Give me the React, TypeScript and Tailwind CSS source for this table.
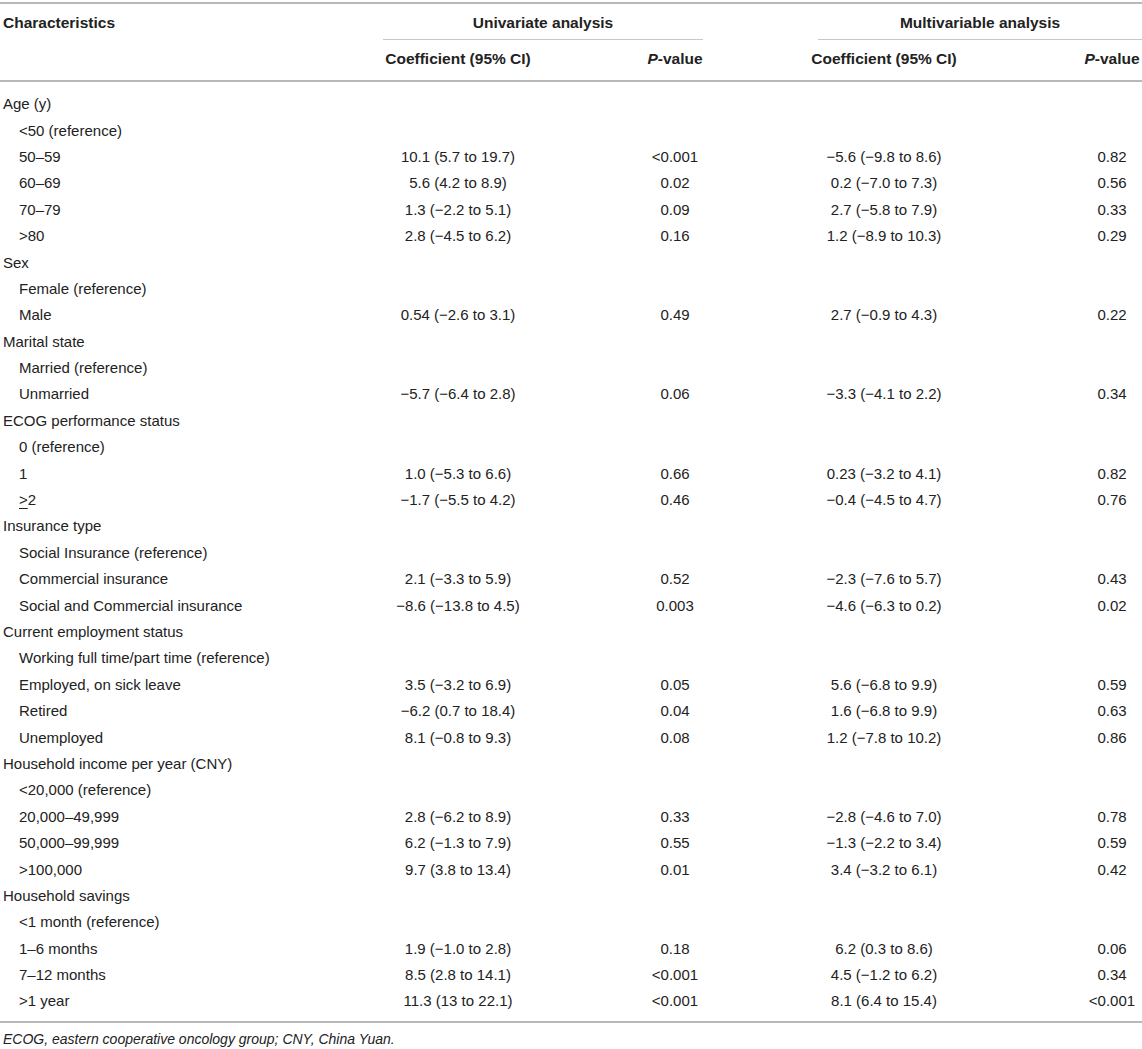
import React from "react";

type Row = {
  label: React.ReactNode;
  sub?: boolean;
  uc?: string;
  up?: string;
  mc?: string;
  mp?: string;
};

const M = "\u2212";

const rows: Row[] = [
  { label: "Age (y)" },
  { label: "<50 (reference)", sub: true },
  { label: "50–59", sub: true, uc: "10.1 (5.7 to 19.7)", up: "<0.001", mc: `${M}5.6 (${M}9.8 to 8.6)`, mp: "0.82" },
  { label: "60–69", sub: true, uc: "5.6 (4.2 to 8.9)", up: "0.02", mc: `0.2 (${M}7.0 to 7.3)`, mp: "0.56" },
  { label: "70–79", sub: true, uc: `1.3 (${M}2.2 to 5.1)`, up: "0.09", mc: `2.7 (${M}5.8 to 7.9)`, mp: "0.33" },
  { label: ">80", sub: true, uc: `2.8 (${M}4.5 to 6.2)`, up: "0.16", mc: `1.2 (${M}8.9 to 10.3)`, mp: "0.29" },
  { label: "Sex" },
  { label: "Female (reference)", sub: true },
  { label: "Male", sub: true, uc: `0.54 (${M}2.6 to 3.1)`, up: "0.49", mc: `2.7 (${M}0.9 to 4.3)`, mp: "0.22" },
  { label: "Marital state" },
  { label: "Married (reference)", sub: true },
  { label: "Unmarried", sub: true, uc: `${M}5.7 (${M}6.4 to 2.8)`, up: "0.06", mc: `${M}3.3 (${M}4.1 to 2.2)`, mp: "0.34" },
  { label: "ECOG performance status" },
  { label: "0 (reference)", sub: true },
  { label: "1", sub: true, uc: `1.0 (${M}5.3 to 6.6)`, up: "0.66", mc: `0.23 (${M}3.2 to 4.1)`, mp: "0.82" },
  {
    label: (
      <>
        <span className="underline underline-offset-[3px]">&gt;</span>2
      </>
    ),
    sub: true,
    uc: `${M}1.7 (${M}5.5 to 4.2)`,
    up: "0.46",
    mc: `${M}0.4 (${M}4.5 to 4.7)`,
    mp: "0.76",
  },
  { label: "Insurance type" },
  { label: "Social Insurance (reference)", sub: true },
  { label: "Commercial insurance", sub: true, uc: `2.1 (${M}3.3 to 5.9)`, up: "0.52", mc: `${M}2.3 (${M}7.6 to 5.7)`, mp: "0.43" },
  { label: "Social and Commercial insurance", sub: true, uc: `${M}8.6 (${M}13.8 to 4.5)`, up: "0.003", mc: `${M}4.6 (${M}6.3 to 0.2)`, mp: "0.02" },
  { label: "Current employment status" },
  { label: "Working full time/part time (reference)", sub: true },
  { label: "Employed, on sick leave", sub: true, uc: `3.5 (${M}3.2 to 6.9)`, up: "0.05", mc: `5.6 (${M}6.8 to 9.9)`, mp: "0.59" },
  { label: "Retired", sub: true, uc: `${M}6.2 (0.7 to 18.4)`, up: "0.04", mc: `1.6 (${M}6.8 to 9.9)`, mp: "0.63" },
  { label: "Unemployed", sub: true, uc: `8.1 (${M}0.8 to 9.3)`, up: "0.08", mc: `1.2 (${M}7.8 to 10.2)`, mp: "0.86" },
  { label: "Household income per year (CNY)" },
  { label: "<20,000 (reference)", sub: true },
  { label: "20,000–49,999", sub: true, uc: `2.8 (${M}6.2 to 8.9)`, up: "0.33", mc: `${M}2.8 (${M}4.6 to 7.0)`, mp: "0.78" },
  { label: "50,000–99,999", sub: true, uc: `6.2 (${M}1.3 to 7.9)`, up: "0.55", mc: `${M}1.3 (${M}2.2 to 3.4)`, mp: "0.59" },
  { label: ">100,000", sub: true, uc: "9.7 (3.8 to 13.4)", up: "0.01", mc: `3.4 (${M}3.2 to 6.1)`, mp: "0.42" },
  { label: "Household savings" },
  { label: "<1 month (reference)", sub: true },
  { label: "1–6 months", sub: true, uc: `1.9 (${M}1.0 to 2.8)`, up: "0.18", mc: "6.2 (0.3 to 8.6)", mp: "0.06" },
  { label: "7–12 months", sub: true, uc: "8.5 (2.8 to 14.1)", up: "<0.001", mc: `4.5 (${M}1.2 to 6.2)`, mp: "0.34" },
  { label: ">1 year", sub: true, uc: "11.3 (13 to 22.1)", up: "<0.001", mc: "8.1 (6.4 to 15.4)", mp: "<0.001" },
];

function PValue() {
  return (
    <>
      <span className="italic">P</span>-value
    </>
  );
}

export default function App() {
  return (
    <div
      className="w-[1142px] h-[1049px] bg-white text-[#222] text-[15px] leading-[20px] overflow-hidden"
      style={{ fontFamily: '"Liberation Sans", Arial, sans-serif' }}
    >
      <div className="pt-[2px]">
        <div className="h-[2px] bg-[#b8b8b8]" />

        {/* Header row 1 */}
        <div className="flex font-bold whitespace-nowrap text-[15.5px]">
          <div className="w-[383px] pl-[3px] pt-[9px]">Characteristics</div>
          <div className="w-[320px] pt-[9px] text-center">
            Univariate analysis
            <div className="mt-[6px] h-px bg-[#c8c8c8]" />
          </div>
          <div className="ml-[115px] w-[324px] pt-[9px] text-center">
            Multivariable analysis
            <div className="mt-[6px] h-px bg-[#c8c8c8]" />
          </div>
        </div>

        {/* Header row 2 */}
        <div className="flex font-bold whitespace-nowrap text-[15.5px] pt-[9px] pb-[11px]">
          <div className="w-[378px]" />
          <div className="w-[160px] text-center">Coefficient (95% CI)</div>
          <div className="ml-[107px] w-[60px] text-center">
            <PValue />
          </div>
          <div className="ml-[89px] w-[180px] text-center">Coefficient (95% CI)</div>
          <div className="ml-[108px] w-[60px] text-center">
            <PValue />
          </div>
        </div>
        <div className="h-[2px] bg-[#b8b8b8]" />

        {/* Body */}
        <div className="pt-[9px]">
          {rows.map((r, i) => (
            <div key={i} className="flex items-center h-[26.4px] whitespace-nowrap">
              <div className={`w-[378px] ${r.sub ? "pl-[19px]" : "pl-[3px]"}`}>{r.label}</div>
              <div className="w-[160px] text-center">{r.uc}</div>
              <div className="ml-[107px] w-[60px] text-center">{r.up}</div>
              <div className="ml-[89px] w-[180px] text-center">{r.mc}</div>
              <div className="ml-[108px] w-[60px] text-center">{r.mp}</div>
            </div>
          ))}
        </div>
        <div className="mt-[6px] h-[2px] bg-[#b8b8b8]" />

        <div className="pt-[7px] pl-[3px] italic text-[14px] leading-[18px]">
          ECOG, eastern cooperative oncology group; CNY, China Yuan.
        </div>
      </div>
    </div>
  );
}
